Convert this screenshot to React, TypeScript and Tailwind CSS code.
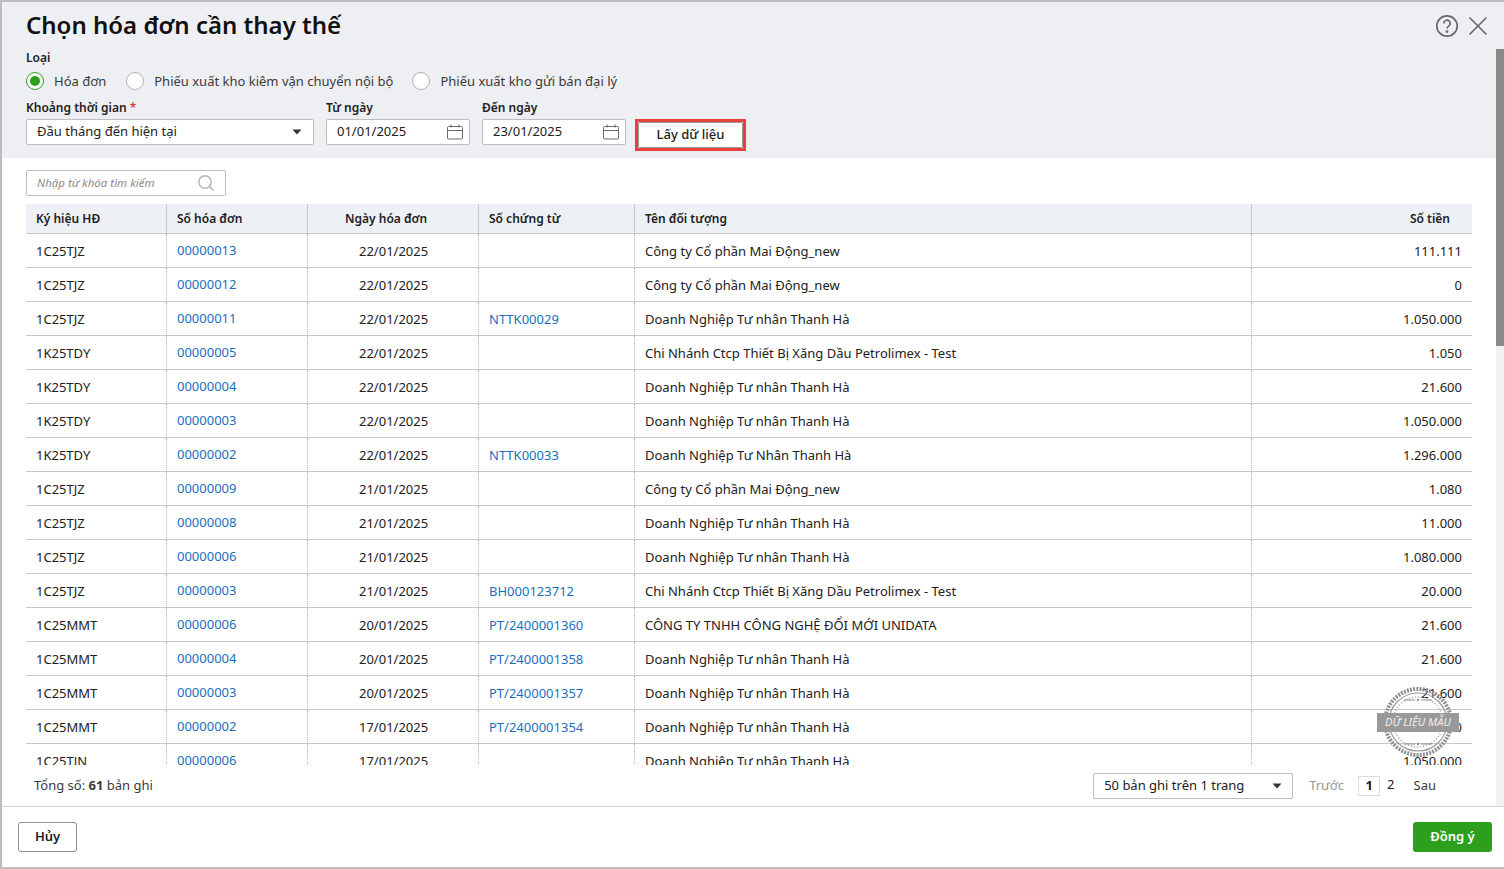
import React from "react";

const rows: [string, string, string, string, string, string][] = [
  ["1C25TJZ", "00000013", "22/01/2025", "", "Công ty Cổ phần Mai Động_new", "111.111"],
  ["1C25TJZ", "00000012", "22/01/2025", "", "Công ty Cổ phần Mai Động_new", "0"],
  ["1C25TJZ", "00000011", "22/01/2025", "NTTK00029", "Doanh Nghiệp Tư nhân Thanh Hà", "1.050.000"],
  ["1K25TDY", "00000005", "22/01/2025", "", "Chi Nhánh Ctcp Thiết Bị Xăng Dầu Petrolimex - Test", "1.050"],
  ["1K25TDY", "00000004", "22/01/2025", "", "Doanh Nghiệp Tư nhân Thanh Hà", "21.600"],
  ["1K25TDY", "00000003", "22/01/2025", "", "Doanh Nghiệp Tư nhân Thanh Hà", "1.050.000"],
  ["1K25TDY", "00000002", "22/01/2025", "NTTK00033", "Doanh Nghiệp Tư Nhân Thanh Hà", "1.296.000"],
  ["1C25TJZ", "00000009", "21/01/2025", "", "Công ty Cổ phần Mai Động_new", "1.080"],
  ["1C25TJZ", "00000008", "21/01/2025", "", "Doanh Nghiệp Tư nhân Thanh Hà", "11.000"],
  ["1C25TJZ", "00000006", "21/01/2025", "", "Doanh Nghiệp Tư nhân Thanh Hà", "1.080.000"],
  ["1C25TJZ", "00000003", "21/01/2025", "BH000123712", "Chi Nhánh Ctcp Thiết Bị Xăng Dầu Petrolimex - Test", "20.000"],
  ["1C25MMT", "00000006", "20/01/2025", "PT/2400001360", "CÔNG TY TNHH CÔNG NGHỆ ĐỔI MỚI UNIDATA", "21.600"],
  ["1C25MMT", "00000004", "20/01/2025", "PT/2400001358", "Doanh Nghiệp Tư nhân Thanh Hà", "21.600"],
  ["1C25MMT", "00000003", "20/01/2025", "PT/2400001357", "Doanh Nghiệp Tư nhân Thanh Hà", "21.600"],
  ["1C25MMT", "00000002", "17/01/2025", "PT/2400001354", "Doanh Nghiệp Tư nhân Thanh Hà", "21.600"],
  ["1C25TJN", "00000006", "17/01/2025", "", "Doanh Nghiệp Tư nhân Thanh Hà", "1.050.000"],
];

const grid = "grid grid-cols-[141px_141px_171px_156px_617px_220px]";

function Calendar() {
  return (
    <svg width="18" height="18" viewBox="0 0 18 18" fill="none" stroke="#6b6b6b" strokeWidth="1">
      <rect x="1.5" y="3.5" width="15" height="12.5" rx="1" />
      <path d="M1.5 7.5h15M5 1.5v3M13 1.5v3" />
    </svg>
  );
}

function Caret() {
  return (
    <svg width="10" height="6" viewBox="0 0 10 6" fill="#333">
      <path d="M0.5 0.5h9L5 5.5z" />
    </svg>
  );
}

function Radio({ on, label, gap }: { on?: boolean; label: string; gap: string }) {
  return (
    <div className={`flex items-center gap-[10px] ${gap}`}>
      <span
        className={`flex h-[18px] w-[18px] items-center justify-center rounded-full border bg-white ${
          on ? "border-[#2ca01c]" : "border-[#b0b3b8]"
        }`}
      >
        {on && <span className="h-[10px] w-[10px] rounded-full bg-[#2ca01c]" />}
      </span>
      <span className="text-[13px] leading-[18px] text-[#3a3a3a]">{label}</span>
    </div>
  );
}

function DateBox({ value }: { value: string }) {
  return (
    <div className="flex h-[26px] w-[144px] items-center justify-between rounded-[2px] border border-[#babec5] bg-white pl-[10px] pr-[5px] text-[13px] text-[#212121]">
      <span>{value}</span>
      <Calendar />
    </div>
  );
}

function Stamp() {
  return (
    <div className="absolute left-[1377px] top-[686px] h-[72px] w-[82px]">
      <svg className="absolute left-[5px] top-0" width="72" height="72" viewBox="0 0 72 72" fill="none">
        <circle cx="36" cy="36" r="33" stroke="#8f8f8f" strokeWidth="4" strokeDasharray="2 1.2" />
        <circle cx="36" cy="36" r="29" stroke="#9a9a9a" strokeWidth="1.2" />
        <circle cx="36" cy="36" r="25" stroke="#9a9a9a" strokeWidth="1.4" strokeDasharray="1 2" />
        <path d="M22 14h11M39 14h11M22 58h11M39 58h11" stroke="#8f8f8f" strokeWidth="1" />
        <circle cx="36" cy="14" r="1.2" fill="#8f8f8f" />
        <circle cx="36" cy="58" r="1.2" fill="#8f8f8f" />
      </svg>
      <div className="absolute left-0 top-[27px] flex h-[19px] w-[82px] items-center justify-center bg-[#999999] text-[11px] italic text-[#eeeeee]">
        DỮ LIỆU MẪU
      </div>
    </div>
  );
}

export default function App() {
  return (
    <div
      className="relative flex h-[869px] w-[1504px] flex-col overflow-hidden border-b-2 border-l-2 border-t-2 border-[#bdbdbd] bg-white text-[13px] text-[#212121]"
      style={{ fontFamily: '"Noto Sans", sans-serif' }}
    >
      <header className="flex h-[156px] shrink-0 flex-col bg-[#eeeff2] pl-[24px] pr-[8px]">
        <div className="flex h-[48px] items-center justify-between pb-[3px]">
          <h1 className="text-[24px] font-semibold leading-[32px] text-[#111111]">Chọn hóa đơn cần thay thế</h1>
          <div className="mr-[8px] mt-[3px] flex items-center gap-[9px]">
            <svg width="24" height="24" viewBox="0 0 24 24" fill="none" stroke="#666" strokeWidth="1.7">
              <circle cx="12" cy="12" r="10.2" />
              <path d="M8.8 9.4a3.2 3.2 0 1 1 4.9 2.7c-1.1.7-1.7 1.3-1.7 2.5" />
              <circle cx="12" cy="17.6" r="0.6" fill="#666" />
            </svg>
            <svg width="20" height="20" viewBox="0 0 20 20" fill="none" stroke="#666" strokeWidth="1.6">
              <path d="M1.5 1.5l17 17M18.5 1.5l-17 17" />
            </svg>
          </div>
        </div>
        <div className="text-[12px] font-semibold leading-[16px] text-[#212121]">Loại</div>
        <div className="mt-[6px] flex h-[18px] items-center">
          <Radio on label="Hóa đơn" gap="mr-[20px]" />
          <Radio label="Phiếu xuất kho kiêm vận chuyển nội bộ" gap="mr-[19px]" />
          <Radio label="Phiếu xuất kho gửi bán đại lý" gap="" />
        </div>
        <div className="mt-[10px] flex items-end">
          <div className="mr-[12px] flex w-[288px] flex-col gap-[3px]">
            <label className="text-[12px] font-semibold leading-[16px]">
              Khoảng thời gian <span className="text-[#e53935]">*</span>
            </label>
            <div className="flex h-[26px] items-center justify-between rounded-[2px] border border-[#babec5] bg-white pl-[10px] pr-[11px]">
              <span>Đầu tháng đến hiện tại</span>
              <Caret />
            </div>
          </div>
          <div className="mr-[12px] flex flex-col gap-[3px]">
            <label className="text-[12px] font-semibold leading-[16px]">Từ ngày</label>
            <DateBox value="01/01/2025" />
          </div>
          <div className="mr-[9px] flex flex-col gap-[3px]">
            <label className="text-[12px] font-semibold leading-[16px]">Đến ngày</label>
            <DateBox value="23/01/2025" />
          </div>
          <div className="mb-[-6px] border-[3px] border-[#e8403a] p-0">
            <button className="flex h-[26px] w-[105px] items-center justify-center rounded-[2px] border border-[#9a9a9a] bg-white text-[13px] font-medium text-[#212121]">
              Lấy dữ liệu
            </button>
          </div>
        </div>
      </header>

      <main className="relative flex min-h-0 flex-1 flex-col pl-[24px]">
        <div className="mt-[12px] flex h-[26px] w-[200px] items-center justify-between rounded-[2px] border border-[#babec5] pl-[10px] pr-[10px]">
          <span className="text-[11.5px] italic text-[#8a8a8a]">Nhập từ khóa tìm kiếm</span>
          <svg width="18" height="18" viewBox="0 0 18 18" fill="none" stroke="#b3b3b3" strokeWidth="1.4">
            <circle cx="8" cy="8" r="6.2" />
            <path d="M12.5 12.5l4 4" />
          </svg>
        </div>
        <div className="mt-[8px] h-[561px] w-[1446px] overflow-hidden">
          <div className={`${grid} h-[30px] border-b border-[#c8c8c8] bg-[#edf0f5] text-[12px] font-semibold leading-[29px]`}>
            <div className="border-r border-[#c8c8c8] pl-[10px]">Ký hiệu HĐ</div>
            <div className="border-r border-[#c8c8c8] pl-[10px]">Số hóa đơn</div>
            <div className="border-r border-[#c8c8c8] pl-[37px]">Ngày hóa đơn</div>
            <div className="border-r border-[#c8c8c8] pl-[10px]">Số chứng từ</div>
            <div className="border-r border-[#c8c8c8] pl-[10px]">Tên đối tượng</div>
            <div className="pr-[22px] text-right">Số tiền</div>
          </div>
          {rows.map((r, i) => (
            <div key={i} className={`${grid} h-[34px] border-b border-[#c8c8c8] leading-[34px]`}>
              <div className="border-r border-dotted border-[#b5b5b5] pl-[10px]">{r[0]}</div>
              <div className="border-r border-dotted border-[#b5b5b5] pl-[10px] leading-[32px] text-[#1a6fc0]">{r[1]}</div>
              <div className="border-r border-dotted border-[#b5b5b5] pl-[51px]">{r[2]}</div>
              <div className="border-r border-dotted border-[#b5b5b5] pl-[10px] text-[#1a6fc0]">{r[3]}</div>
              <div className="border-r border-dotted border-[#b5b5b5] pl-[10px]">{r[4]}</div>
              <div className="pr-[10px] text-right">{r[5]}</div>
            </div>
          ))}
        </div>
        <div className="flex h-[41px] w-[1446px] items-center">
          <div className="pl-[8px] text-[#3a3a3a]">
            Tổng số: <b className="font-bold">61</b> bản ghi
          </div>
          <div className="ml-auto flex items-center">
            <div className="flex h-[26px] w-[200px] items-center justify-between rounded-[2px] border border-[#babec5] pl-[10px] pr-[10px]">
              <span>50 bản ghi trên 1 trang</span>
              <Caret />
            </div>
            <span className="ml-[16px] text-[#9a9a9a]">Trước</span>
            <span className="ml-[14px] flex h-[20px] w-[22px] items-center justify-center border border-[#dcdcdc] font-bold">1</span>
            <span className="ml-[7px] -translate-y-[1px]">2</span>
            <span className="ml-[19px] mr-[36px] text-[#3a3a3a]">Sau</span>
          </div>
        </div>
        <div className="absolute bottom-0 right-0 top-[-109px] w-[8px] bg-[#f1f1f1]">
          <div className="h-[297px] w-full bg-[#8a8a8a]" />
        </div>
      </main>

      <footer className="flex h-[61px] shrink-0 items-center justify-between border-t border-[#d2d2d2] bg-white pl-[16px] pr-[12px]">
        <button className="h-[30px] w-[59px] rounded-[3px] border border-[#8e8e8e] bg-white text-[13px] font-semibold">Hủy</button>
        <button className="h-[30px] w-[79px] rounded-[3px] bg-[#2ca01c] text-[13px] font-semibold text-white">Đồng ý</button>
      </footer>
      <div className="absolute left-[-2px] top-[-2px] h-[869px] w-[1504px]">
        <Stamp />
      </div>
    </div>
  );
}
